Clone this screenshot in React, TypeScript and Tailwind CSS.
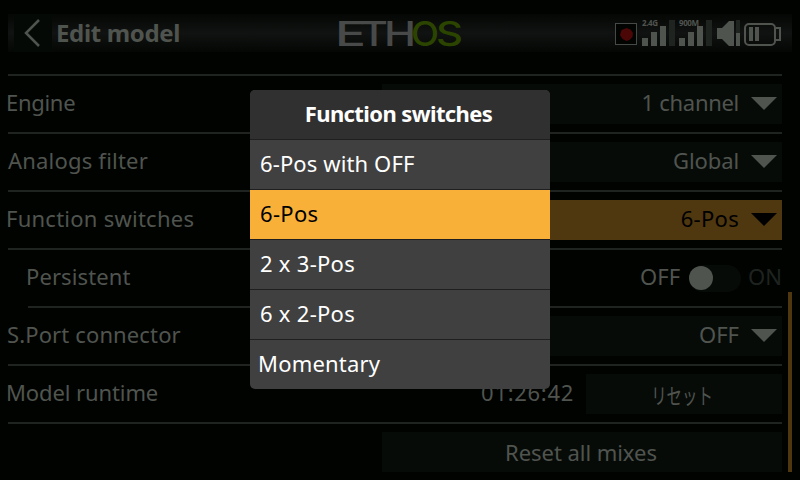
import type { ReactNode } from "react";

function Arrow({ dark = false }: { dark?: boolean }) {
  return (
    <svg width="26" height="14" viewBox="0 0 26 14" className={`mr-[5px] ml-3 shrink-0 ${dark ? "fill-black" : "fill-[#50544f]"}`}>
      <path d="M0 0H26L13 13Z" />
    </svg>
  );
}

function Dropdown({ children, active = false, track }: { children: ReactNode; active?: boolean; track: string }) {
  return (
    <div className={`flex h-10 w-[400px] items-center justify-end ${active ? "bg-[#4f3710] text-black" : "bg-[#070b08]"}`}>
      <span className={`relative -top-0.5 ${track}`}>{children}</span>
      <Arrow dark={active} />
    </div>
  );
}

function Row({ label, track, pad, line = "ml-0", children }: { label: string; track: string; pad: string; line?: string; children: ReactNode }) {
  return (
    <div className="h-[58px]">
      <div className={`h-[2px] bg-[#202421] ${line}`} />
      <div className="flex h-14 items-center justify-between">
        <span className={`relative -top-0.5 ${pad} ${track}`}>{label}</span>
        {children}
      </div>
    </div>
  );
}

function StatusIcons() {
  return (
    <svg width="170" height="38" viewBox="0 0 170 38" className="mr-[10px] fill-[#50544f]">
      <rect x="3.5" y="9.5" width="21" height="21" fill="#020402" stroke="#464a46" />
      <path d="M14.5 14L18.5 15.5L21 19L20.5 23L17.5 26L14.5 27L10.5 25L8 21L9.5 16Z" fill="#4b0606" />
      <g fontFamily="Noto Sans, sans-serif" fontWeight="700" fontSize="8">
        <text x="30" y="12" textLength="16">2.4G</text>
        <text x="67" y="12" textLength="20">900M</text>
      </g>
      <path d="M30 24h6v8h-6zM39 18h6v14h-6zM48 12h6v20h-6zM67 24h6v8h-6zM76 18h6v14h-6zM85 12h6v20h-6z" />
      <path d="M57 6h6v26h-6zM94 6h6v26h-6zM124 6h4v26h-4z" fill="#1f2421" />
      <path d="M105 14h5l7-7h5v25h-5l-7-7h-5zM124 19h4v13h-4z" />
      <rect x="133" y="10" width="30" height="21" rx="4" fill="none" stroke="#50544f" strokeWidth="2" />
      <path d="M137 13h4v14h-4zM143 13h4v14h-4z" />
      <path d="M164 14h4v12h-4" fill="none" stroke="#50544f" strokeWidth="2" />
    </svg>
  );
}

const options = [
  { label: "6-Pos with OFF", style: "pl-[10px] tracking-[0.12px]" },
  { label: "6-Pos", style: "pl-[10px] tracking-[0.3px] bg-[#f8b038] text-black" },
  { label: "2 x 3-Pos", style: "pl-[10px] tracking-[0.28px]" },
  { label: "6 x 2-Pos", style: "pl-[10px] tracking-[0.28px]" },
  { label: "Momentary", style: "pl-[8px] tracking-[0.2px]" },
];

export default function App() {
  return (
    <div className="relative h-[480px] w-[800px] overflow-hidden bg-[#000300] font-['Noto_Sans','Noto_Sans_CJK_JP',sans-serif] text-[22px] leading-[30px] whitespace-nowrap text-[#50544f]">
      <header className="flex h-[74px] items-start px-2 pt-[14px]">
        <div className="grid h-[38px] w-full grid-cols-[1fr_126px_1fr] items-center bg-linear-to-b from-[#050705] via-[#111312] to-[#050705]">
          <div className="flex items-center">
            <div className="ml-[6px] flex h-[38px] w-[38px] items-center bg-[#050906]">
              <svg width="38" height="38" fill="none" stroke="#50544f" strokeWidth="2.5"><path d="M25 6L12 19L25 32" /></svg>
            </div>
            <span className="ml-1 text-[24px] font-bold tracking-[-0.35px]">Edit model</span>
          </div>
          <svg width="126" height="50" viewBox="0 -6 126 50" className="-my-1.5 overflow-visible" fontFamily="Inter, sans-serif" fontWeight="500" fontSize="34">
            <text y="32" fill="#484a49">
              <tspan x="-2" textLength="31" lengthAdjust="spacingAndGlyphs">E</tspan>
              <tspan x="23" textLength="28" lengthAdjust="spacingAndGlyphs">T</tspan>
              <tspan x="47" textLength="32" lengthAdjust="spacingAndGlyphs">H</tspan>
            </text>
            <text y="32" fill="#2b4500">
              <tspan x="74" textLength="28" lengthAdjust="spacingAndGlyphs">O</tspan>
              <tspan x="99" textLength="27" lengthAdjust="spacingAndGlyphs">S</tspan>
            </text>
          </svg>
          <div className="flex justify-end"><StatusIcons /></div>
        </div>
      </header>
      <main className="mr-[18px] ml-2">
        <Row label="Engine" pad="-ml-[2px]" track="tracking-[-0.3px]"><Dropdown track="tracking-[-0.3px]">1 channel</Dropdown></Row>
        <Row label="Analogs filter" pad="" track="tracking-[0.2px]"><Dropdown track="tracking-[-0.1px]">Global</Dropdown></Row>
        <Row label="Function switches" pad="-ml-[2px]" track="tracking-[0.25px]"><Dropdown active track="tracking-[0.3px]">6-Pos</Dropdown></Row>
        <Row label="Persistent" pad="ml-[18px]" track="tracking-[0.1px]">
          <div className="flex items-center">
            <span className="relative -top-0.5">OFF</span>
            <div className="mr-[7px] ml-[9px] flex h-[27px] w-[52px] items-center rounded-full bg-[#070b08]">
              <div className="h-6 w-6 rounded-full bg-[#50544f]" />
            </div>
            <span className="relative -top-0.5 text-[#1f2320]">ON</span>
          </div>
        </Row>
        <Row label="S.Port connector" pad="-ml-[1px]" track="tracking-[0.13px]" line="ml-5"><Dropdown track="tracking-[0px]">OFF</Dropdown></Row>
        <Row label="Model runtime" pad="-ml-[2px]" track="tracking-[-0.1px]">
          <div className="flex items-center">
            <span className="relative -top-0.5 mr-3 tracking-[0.7px]">01:26:42</span>
            <div className="flex h-10 w-[196px] items-center justify-center bg-[#070b08]"><span className="relative top-px left-[-2px] scale-x-[0.7]">リセット</span></div>
          </div>
        </Row>
        <Row label="" pad="" track="">
          <div className="flex h-10 w-[400px] items-center justify-center bg-[#070b08]"><span className="relative -left-px tracking-[-0.05px]">Reset all mixes</span></div>
        </Row>
      </main>
      <div className="absolute top-[292px] left-[788px] h-[180px] w-1 bg-[#4f3710]" />
      <div className="absolute top-[90px] left-[250px] w-[300px] overflow-hidden rounded-[5px] bg-[#404040] text-white">
        <div className="flex h-[49px] items-center justify-center bg-[#303030] pr-[3px] pb-[3px] font-bold tracking-[-0.6px]">Function switches</div>
        {options.map((o) => (
          <div key={o.label} className="border-t border-[#1f1f1f]">
            <div className={`flex h-[49px] items-center pb-[3px] ${o.style}`}>{o.label}</div>
          </div>
        ))}
      </div>
    </div>
  );
}
